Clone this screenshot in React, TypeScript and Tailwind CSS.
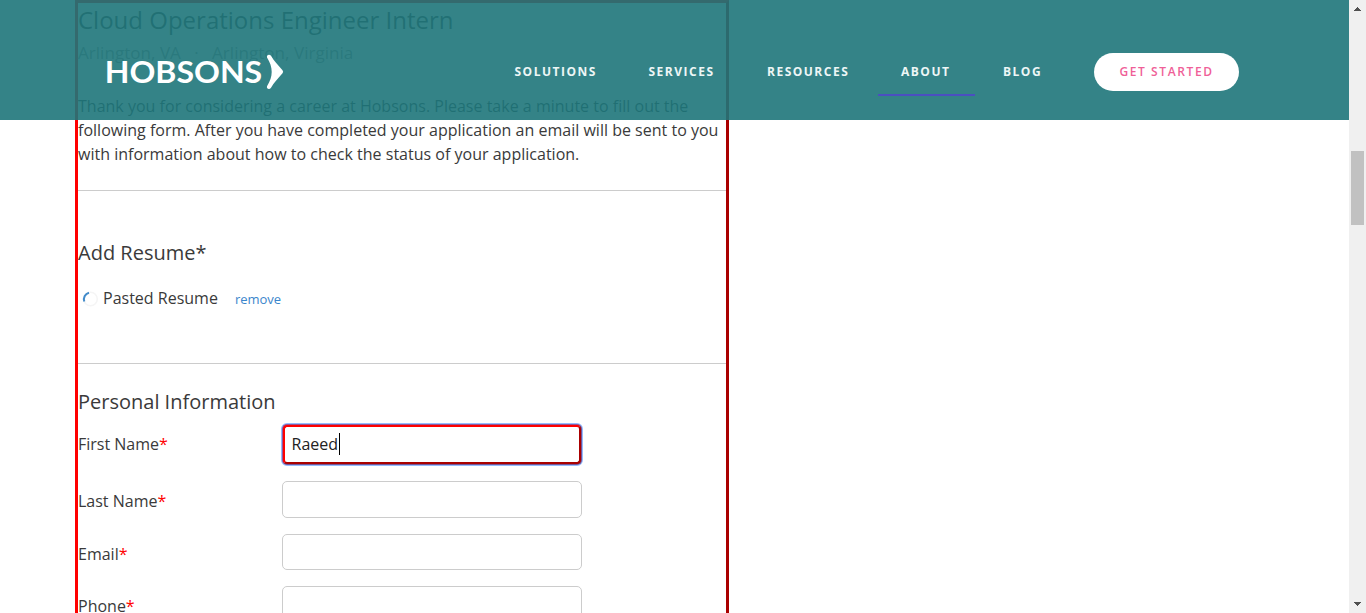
import React from "react";

function NavItem({ label, className = "" }: { label: string; className?: string }) {
  return (
    <a className={`block shrink-0 whitespace-nowrap text-[12px] font-bold leading-[18px] tracking-[1.5px] text-[#edf6f6] ${className}`}>
      {label}
    </a>
  );
}

function Logo() {
  return (
    <svg width="180" height="38" viewBox="0 0 180 38" className="ml-[105px] mt-[53px] shrink-0">
      <text x="-0.3" y="30" textLength="157.5" lengthAdjust="spacingAndGlyphs" fill="#fff" fontSize="30.5" fontWeight="700" fontFamily="Lato, sans-serif">
        HOBSONS
      </text>
      <path d="M162 4.500C161.300 1.800 164.500 0.800 166 2.800C169 8 172.500 11.500 177.500 17.300Q178.800 18.800 177.500 20.300C172.500 26 169 29.500 166 34.800C164.500 37 161.300 36 162 33.200C168.300 23.500 168.300 14.500 162 4.500Z" fill="#fff" />
    </svg>
  );
}

function Header() {
  return (
    <header className="absolute left-0 top-0 flex h-[120px] w-[1349px] items-start bg-[rgb(30_118_122_/_0.9)]">
      <Logo />
      <nav className="flex items-start pt-[63px]">
        <NavItem label="SOLUTIONS" className="ml-[229.5px] w-[134px]" />
        <NavItem label="SERVICES" className="w-[118.5px]" />
        <NavItem label="RESOURCES" className="w-[111px]" />
        <NavItem label="ABOUT" className="h-[33px] w-[97px] border-b-2 border-[#4b4fc0] pl-[23px]" />
        <NavItem label="BLOG" className="ml-[28px] w-[88px]" />
      </nav>
      <button className="ml-[3px] mt-[53px] h-[38px] w-[145px] shrink-0 rounded-full bg-white text-[12px] font-semibold tracking-[1.6px] text-[#ef5f98]">
        GET STARTED
      </button>
    </header>
  );
}

function Field({ label, className, inputClass, value }: { label: string; className: string; inputClass: string; value?: string }) {
  return (
    <div className={`flex items-start ${className}`}>
      <label className="w-[204px] pt-[8px] leading-6">
        {label}
        <span className="text-[#f00]">*</span>
      </label>
      <div className={`flex w-[300px] items-center bg-white ${inputClass}`}>
        {value && (
          <>
            <span className="text-[#222]">{value}</span>
            <span className="ml-[0.6px] h-[22px] w-px bg-black" />
          </>
        )}
      </div>
    </div>
  );
}

function Spinner() {
  return (
    <svg width="18" height="18" viewBox="0 0 18 18" fill="none" className="ml-1 mt-[9px]">
      <circle cx="8.500" cy="9" r="6.800" stroke="#f5f5f5" strokeWidth="1.500" />
      <path d="M2.300 11.500A6.800 6.800 0 0 1 7 2.700" stroke="#428bca" strokeWidth="2" />
    </svg>
  );
}

function Scrollbar() {
  return (
    <aside className="flex w-[17px] shrink-0 flex-col items-center bg-[#f0f0f0]">
      <svg width="7" height="4" viewBox="0 0 7 4" shapeRendering="crispEdges" className="mt-[7px] shrink-0" fill="#505050">
        <path d="M3 0h1v1h1v1h1v1h1v1H0V3h1V2h1V1h1z" />
      </svg>
      <div className="mt-[140px] h-[74px] w-[13px] shrink-0 bg-[#c1c1c1]" />
      <svg width="7" height="4" viewBox="0 0 7 4" shapeRendering="crispEdges" className="mb-[7px] mt-auto shrink-0" fill="#505050">
        <path d="M0 0h7v1H6v1H5v1H4v1H3V3H2V2H1V1H0z" />
      </svg>
    </aside>
  );
}

export default function App() {
  return (
    <div className="relative flex h-[613px] w-[1366px] overflow-hidden bg-white font-['Open_Sans',sans-serif] text-[16px] text-[#3a3a3a]">
      <div className="flex-1">
        <main className="ml-[75px] h-[640px] w-[654px] border-[3px] border-b-[#a00] border-l-[#f00] border-r-[#a00] border-t-[#f00]">
          <h1 className="pt-[1px] text-[24px] leading-[32px] text-[#444]">Cloud Operations Engineer Intern</h1>
          <p className="mt-[5px] whitespace-pre text-[17.1px] leading-6 text-[#999]">Arlington, VA   ·   Arlington, Virginia</p>
          <p className="mt-[29px] whitespace-nowrap leading-6 tracking-[0.01px]">
            Thank you for considering a career at Hobsons. Please take a minute to fill out the
            <br />
            following form. After you have completed your application an email will be sent to you
            <br />
            with information about how to check the status of your application.
          </p>
          <hr className="mt-[24px] border-[#ccc]" />
          <h2 className="mt-[48px] text-[20px] leading-7">Add Resume*</h2>
          <div className="mt-[14px] flex h-[40px] items-start">
            <Spinner />
            <span className="ml-[3px] mt-[5px] leading-6">Pasted Resume</span>
            <a className="ml-[17px] mt-[8px] text-[13px] leading-5 text-[#3b86cc]">remove</a>
          </div>
          <hr className="mt-[42px] border-[#ccc]" />
          <h2 className="mt-[24px] text-[20px] leading-7">Personal Information</h2>
          <Field
            label="First Name"
            value="Raeed"
            className="mt-[8px] h-[57px]"
            inputClass="h-[41px] rounded-[5px] border-[3px] border-t-[#f00] border-l-[#f00] border-r-[#a00] border-b-[#a00] pb-[2px] pl-[6.5px] outline-[2px] -outline-offset-1 outline-[#4d90fe]/60"
          />
          <Field label="Last Name" className="h-[53px]" inputClass="h-[37px] rounded-[5px] border border-[#ccc]" />
          <Field label="Email" className="h-[52px]" inputClass="h-[36px] rounded-[5px] border border-[#ccc]" />
          <Field label="Phone" className="h-[52px]" inputClass="h-[37px] rounded-[5px] border border-[#ccc]" />
        </main>
      </div>
      <Scrollbar />
      <Header />
    </div>
  );
}
